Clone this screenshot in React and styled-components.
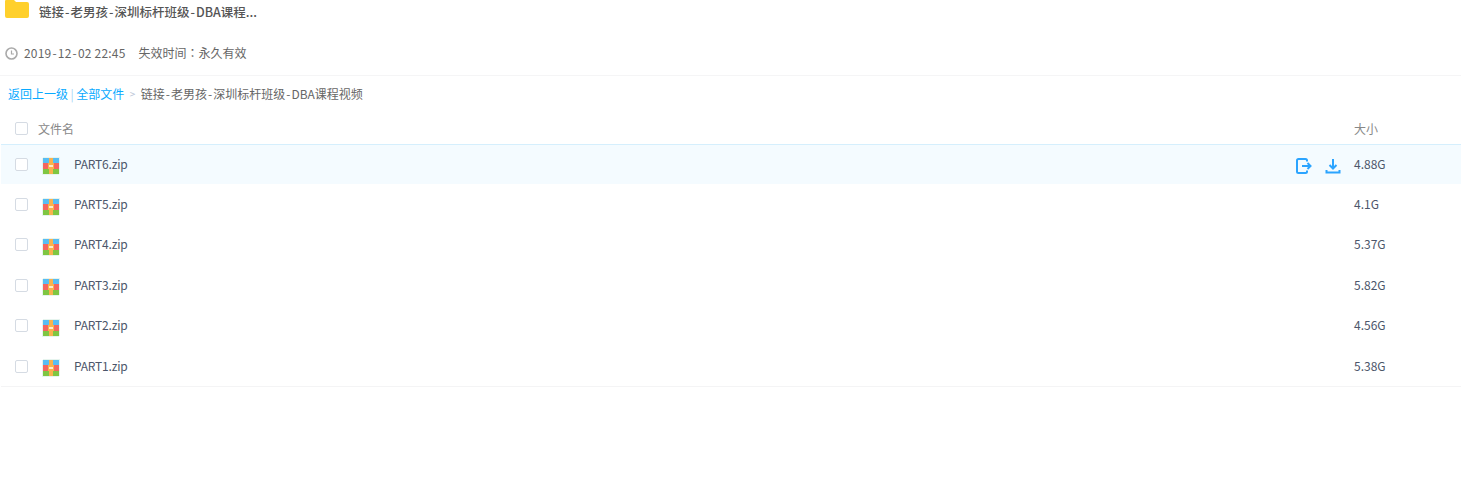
import React from "react";
import styled, { createGlobalStyle } from "styled-components";

const Global = createGlobalStyle`
  html, body { margin: 0; padding: 0; background: #fff; }
  body { font-family: "Noto Sans CJK SC", "Liberation Sans", sans-serif; font-size: 12px; color: #424e67; }
`;
const Page = styled.div`width: 1461px; height: 492px; overflow: hidden; position: relative;`;
const TitleBar = styled.div`display: flex; align-items: center; height: 24px; padding-left: 5px; gap: 10px;`;
const FolderIcon = styled.svg`width: 24px; height: 20px; flex: none; margin-top: -5px;`;
const Title = styled.div`font-size: 12.5px; font-weight: 500; color: #555; line-height: 23px; margin-top: -1px;`;
const Dash = styled.span`margin: 0 1px;`;
const Colon = styled.span`font-family: "Noto Sans CJK TC", sans-serif;`;
const Meta = styled.div`display: flex; align-items: center; height: 44px; padding: 8px 0 0 5px; color: #666; border-bottom: 1px solid #f5f5f6; margin-top: -1px;`;
const ClockIcon = styled.svg`width: 13px; height: 13px; margin-right: 6px;`;
const DateText = styled.span`margin-right: 13px; line-height: 16px; letter-spacing: 0.2px;`;
const MetaText = styled.span`line-height: 16px;`;
const Crumbs = styled.div`display: flex; align-items: center; height: 35px; padding: 0 0 1px 8px; color: #666; box-sizing: border-box;`;
const CrumbLink = styled.span`color: #09aaff;`;
const CrumbSep = styled.span`color: ${(p) => p.$c}; margin: 0 ${(p) => p.$m}px; font-size: ${(p) => p.$s}px;`;
const Head = styled.div`display: grid; grid-template-columns: 1354px 1fr; align-items: center; height: 33px; box-sizing: border-box; padding-top: 1px; color: #888;`;
const NameCell = styled.div`display: flex; align-items: center;`;
const Check = styled.span`width: 11px; height: 11px; border: 1px solid #d5dbe3; border-radius: 2px; margin-left: 15px; flex: none; background: #fff;`;
const RowCheck = styled(Check)`margin-left: 14px; margin-top: -1px;`;
const HeadLabel = styled.span`margin-left: 10px;`;
const Row = styled.div`
  display: grid; grid-template-columns: 1353px 1fr; align-items: center; height: 39.4px;
  border-top: 1px solid ${(p) => (p.$active ? "#d5effd" : "transparent")};
  border-bottom: 1px solid ${(p) => (p.$active ? "#d5effd" : "#f4f4f5")};
  background: ${(p) => (p.$active ? "#f4fbff" : "#fff")};
  margin-top: ${(p) => (p.$active ? 0 : -1)}px;
  margin-left: 1px;
  color: #4c566a;
`;
const ZipIcon = styled.svg`width: 18px; height: 18px; margin: 3px 0 0 14px; flex: none;`;
const FileName = styled.span`margin-left: 14px; flex: 1; margin-top: -3px; letter-spacing: -0.2px;`;
const Actions = styled.div`display: flex; align-items: center; gap: 13px; margin-right: 13px; margin-top: 2px;`;
const ActionIcon = styled.svg`width: 16px; height: 16px; color: #2ba4ff;`;
const Size = styled.span`margin-top: -3px;`;

const Zip = () => (
  <ZipIcon viewBox="0 0 18 18" shapeRendering="crispEdges">
    <rect x="0" y="0" width="18" height="18" rx="2" fill="#e6f4ee" />
    <rect x="1" y="1" width="16" height="5" fill="#58bdf3" />
    <rect x="1" y="6" width="16" height="6" fill="#f4655f" />
    <rect x="1" y="12" width="16" height="5" fill="#7fc642" />
    <rect x="7" y="1" width="4" height="16" fill="#f9b24d" />
    <rect x="6" y="6" width="6" height="6" fill="#f9b24d" />
    <rect x="7" y="8" width="4" height="2" fill="#fdeccb" />
  </ZipIcon>
);

const files = [
  ["PART6.zip", "4.88G"],
  ["PART5.zip", "4.1G"],
  ["PART4.zip", "5.37G"],
  ["PART3.zip", "5.82G"],
  ["PART2.zip", "4.56G"],
  ["PART1.zip", "5.38G"],
];

export default function App() {
  return (
    <Page>
      <Global />
      <TitleBar>
        <FolderIcon viewBox="0 0 24 20">
          <path d="M1 0h8l2 2h11a2 2 0 0 1 2 2v12a2 2 0 0 1-2 2H2a2 2 0 0 1-2-2V1a1 1 0 0 1 1-1z" fill="#ffd02c" />
        </FolderIcon>
        <Title>链接<Dash>-</Dash>老男孩<Dash>-</Dash>深圳标杆班级<Dash>-</Dash>DBA课程...</Title>
      </TitleBar>
      <Meta>
        <ClockIcon viewBox="0 0 13 13">
          <circle cx="6.5" cy="6.5" r="5.5" fill="none" stroke="#aaa" strokeWidth="1.6" />
          <path d="M6.5 3.5v3.5h2.5" fill="none" stroke="#aaa" strokeWidth="1.2" />
        </ClockIcon>
        <DateText>2019<Dash>-</Dash>12<Dash>-</Dash>02 22:45</DateText>
        <MetaText>失效时间<Colon>：</Colon>永久有效</MetaText>
      </Meta>
      <Crumbs>
        <CrumbLink>返回上一级</CrumbLink>
        <CrumbSep $m={2.5} $s={12} $c="#a9d4f5">|</CrumbSep>
        <CrumbLink>全部文件</CrumbLink>
        <CrumbSep $m={5.5} $s={10} $c="#b9c4d6">&gt;</CrumbSep>
        <span>链接<Dash>-</Dash>老男孩<Dash>-</Dash>深圳标杆班级<Dash>-</Dash>DBA课程视频</span>
      </Crumbs>
      <Head>
        <NameCell>
          <Check />
          <HeadLabel>文件名</HeadLabel>
        </NameCell>
        <span>大小</span>
      </Head>
      {files.map(([name, size], i) => (
        <Row key={name} $active={i === 0}>
          <NameCell>
            <RowCheck />
            <Zip />
            <FileName>{name}</FileName>
            {i === 0 && (
              <Actions>
                <ActionIcon viewBox="0 0 16 16" fill="none" stroke="currentColor" strokeWidth="2">
                  <path d="M11 3.5V2.500A1.500 1.500 0 0 0 9.500 1H2.500A1.500 1.500 0 0 0 1 2.500v11A1.500 1.500 0 0 0 2.500 15h7a1.500 1.500 0 0 0 1.500-1.500v-1" />
                  <path d="M6 8h8.500M11.500 5l3 3-3 3" />
                </ActionIcon>
                <ActionIcon viewBox="0 0 16 16" fill="none" stroke="currentColor" strokeWidth="2">
                  <path d="M8 1v9M4.500 7l3.500 3.500L11.500 7" />
                  <path d="M1.500 12v2.500h13V12" />
                </ActionIcon>
              </Actions>
            )}
          </NameCell>
          <Size>{size}</Size>
        </Row>
      ))}
    </Page>
  );
}
